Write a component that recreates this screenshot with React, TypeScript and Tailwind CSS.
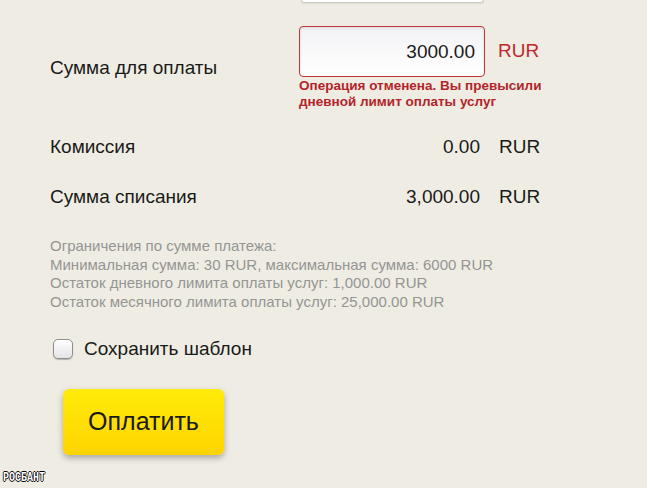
import React, { useState } from 'react';

const FONT = "font-[family-name:'Liberation_Sans',Arial,sans-serif]";

const limits = [
    'Ограничения по сумме платежа:',
    'Минимальная сумма: 30 RUR, максимальная сумма: 6000 RUR',
    'Остаток дневного лимита оплаты услуг: 1,000.00 RUR',
    'Остаток месячного лимита оплаты услуг: 25,000.00 RUR',
];

function SummaryRow({ label, value }: { label: string; value: string }) {
    return (
        <div className="flex items-center h-[50px] text-[19px] text-[#1a1a1a]">
            <div className="w-[249px]">{label}</div>
            <div className="w-[181px] text-right">{value}</div>
            <div className="ml-[19px]">RUR</div>
        </div>
    );
}

export default function App() {
    const [amount, setAmount] = useState('3000.00');
    const [saveTemplate, setSaveTemplate] = useState(false);

    return (
        <div className={`relative h-[488px] w-[647px] overflow-hidden bg-[#efede3] ${FONT}`}>
            <div className="pl-[50px]">
                {/* bottom edge of the field above */}
                <div className="ml-[251px] h-[3px] w-[183px] rounded-b-[3px] border-x border-b border-[#cfccc4] bg-white shadow-[0_1px_1px_rgba(0,0,0,0.08)]" />

                <div className="mt-[23px] flex items-center">
                    <div className="w-[249px] text-[19px] text-[#1a1a1a]">Сумма для оплаты</div>
                    <div className="flex flex-col">
                        <div className="flex items-center">
                            <input
                                value={amount}
                                onChange={(e) => setAmount(e.target.value)}
                                className="h-[51px] w-[186px] rounded-[4px] border border-[#c2353a] bg-gradient-to-b from-[#f3f3f6] to-white px-[9px] text-right text-[19px] text-[#1a1a1a] shadow-[inset_0_1px_3px_rgba(0,0,0,0.12)] outline-none"
                            />
                            <span className="ml-[13px] text-[19px] text-[#c0272d]">RUR</span>
                        </div>
                        <p className="mt-[1px] text-[13.5px] font-bold leading-[16px] text-[#b3242a]">
                            Операция отменена. Вы превысили
                            <br />
                            дневной лимит оплаты услуг
                        </p>
                    </div>
                </div>

                <div className="mt-[12px]">
                    <SummaryRow label="Комиссия" value="0.00" />
                    <SummaryRow label="Сумма списания" value="3,000.00" />
                </div>

                <div className="mt-[15px] text-[15px] leading-[18.5px] text-[#959593]">
                    {limits.map((line) => (
                        <div key={line}>{line}</div>
                    ))}
                </div>

                <label className="mt-[24px] flex items-center gap-[11px] text-[19px] text-[#1a1a1a] cursor-pointer">
                    <span
                        onClick={() => setSaveTemplate((v) => !v)}
                        className="ml-[3px] flex h-[20px] w-[20px] items-center justify-center rounded-[5px] border border-[#8e8e8e] bg-gradient-to-b from-white to-[#e4e4e4] shadow-[0_1px_1px_rgba(0,0,0,0.25)]"
                    >
                        {saveTemplate && <span className="text-[14px] leading-none">✓</span>}
                    </span>
                    Сохранить шаблон
                </label>

                <button className="ml-[13px] mt-[25px] flex h-[66px] w-[161px] items-center justify-center rounded-[6px] bg-gradient-to-b from-[#ffeb0a] to-[#ffd400] text-[25px] text-[#1a1a1a] shadow-[0_3px_6px_rgba(0,0,0,0.3)]">
                    Оплатить
                </button>
            </div>

            <div className="absolute bottom-[4px] left-[3px] origin-left scale-x-[0.77] font-[family-name:'Liberation_Mono',monospace] text-[13px] font-bold leading-none text-white [text-shadow:1px_0_0_#000,-1px_0_0_#000,0_1px_0_#000,0_-1px_0_#000]">
                РОСБАНТ
            </div>
        </div>
    );
}
